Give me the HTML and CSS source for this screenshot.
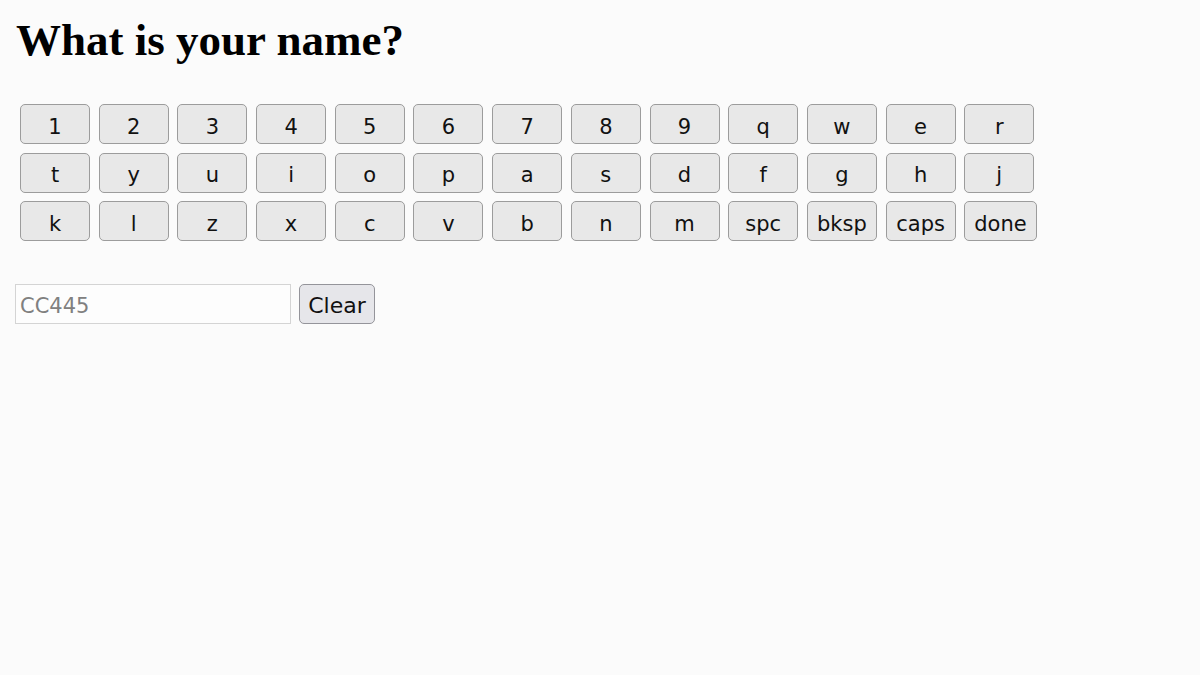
FILE: index.html
```html
<!DOCTYPE html>
<html lang="en">
  <head>
    <meta charset="UTF-8" />
    <meta name="viewport" content="width=device-width, initial-scale=1.0" />
    <title>What is your name?</title>
    <link rel="stylesheet" href="styles.css">
  </head>
  <body>
    <h1>What is your name?</h1>

    <div id="keyboard">
      <div class="row">
        <button>1</button><button>2</button><button>3</button><button>4</button>
        <button>5</button><button>6</button><button>7</button><button>8</button>
        <button>9</button><button>q</button><button>w</button><button>e</button>
        <button>r</button>
      </div>
      <div class="row">
        <button>t</button><button>y</button><button>u</button><button>i</button>
        <button>o</button><button>p</button><button>a</button><button>s</button>
        <button>d</button><button>f</button><button>g</button><button>h</button>
        <button>j</button>
      </div>
      <div class="row">
        <button>k</button><button>l</button><button>z</button><button>x</button>
        <button>c</button><button>v</button><button>b</button><button>n</button>
        <button>m</button><button>spc</button><button>bksp</button><button>caps</button>
        <button>done</button>
      </div>
    </div>

    <div class="entry">
      <input type="text" id="name" placeholder="CC445" />
      <button id="clear">Clear</button>
    </div>
  </body>
</html>
```

FILE: styles.css
```css
body {
  margin: 0;
  padding: 0 15px;
  background: #fbfbfb;
  font-family: "DejaVu Sans", Verdana, sans-serif;
}
h1 {
  font-family: "Liberation Serif", "Times New Roman", serif;
  font-size: 45px;
  margin: 0;
  padding: 14px 0 0 1px;
  line-height: 52px;
}
#keyboard {
  margin-top: 38px;
  padding-left: 5px;
  display: flex;
  flex-direction: column;
  gap: 8.5px;
}
.row {
  display: flex;
  gap: 8.7px;
}
button {
  font-family: inherit;
  font-size: 21px;
  color: #111;
  background: #e8e8e8;
  border: 1px solid #9c9c9c;
  border-radius: 5px;
  height: 40px;
  min-width: 70px;
  padding: 5px 9px 0;
}
.entry {
  margin-top: 43px;
  display: flex;
  gap: 8px;
}
#name {
  box-sizing: border-box;
  width: 276px;
  height: 40px;
  border: 1px solid #d4d4d4;
  background: #fdfdfd;
  font-family: inherit;
  font-size: 21px;
  padding: 3px 4px 0;
}
#name::placeholder {
  color: #808080;
}
#clear {
  min-width: 0;
  width: 76px;
  padding: 3px 4px 0;
  font-size: 22px;
  background: #e6e6ea;
  border-color: #94949a;
}
```
